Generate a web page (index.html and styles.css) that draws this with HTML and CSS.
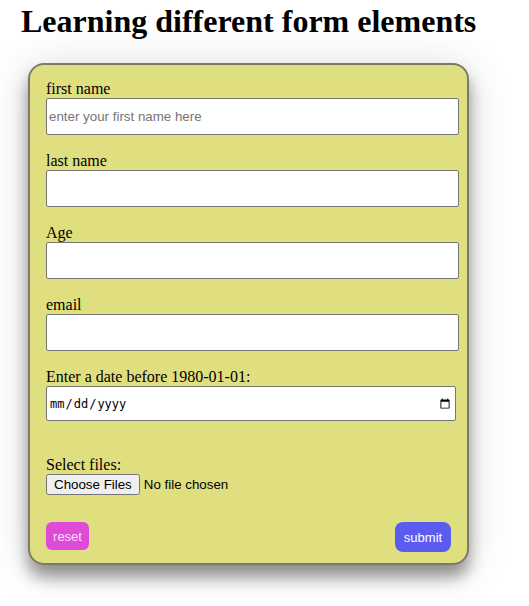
FILE: index.html
```html
<!DOCTYPE html>
<html>
<head>
<meta charset="utf-8">
<link rel="stylesheet" href="styles.css">
</head>
<body>
<h1 class="title">Learning different form elements</h1>
<form class="card">
  <div class="field">
    <label class="lbl" for="fn">first name</label>
    <input class="txt" id="fn" type="text" placeholder="enter your first name here">
  </div>
  <div class="field">
    <label class="lbl" for="ln">last name</label>
    <input class="txt" id="ln" type="text">
  </div>
  <div class="field">
    <label class="lbl" for="age">Age</label>
    <input class="txt" id="age" type="text">
  </div>
  <div class="field">
    <label class="lbl" for="em">email</label>
    <input class="txt" id="em" type="text">
  </div>
  <div class="field">
    <label class="lbl" for="dt">Enter a date before 1980-01-01:</label>
    <input class="date" id="dt" type="date" max="1979-12-31">
  </div>
  <div class="field files">
    <label class="lbl" for="fl">Select files:</label>
    <input class="file" id="fl" type="file" multiple>
  </div>
  <div class="actions">
    <button class="btn reset" type="reset">reset</button>
    <button class="btn submit" type="submit">submit</button>
  </div>
</form>
</body>
</html>
```

FILE: styles.css
```css
html, body {
  margin: 0;
  padding: 0;
  background: #ffffff;
}
body {
  font-family: "Liberation Serif", "Times New Roman", serif;
  font-size: 16px;
  color: #000;
  min-height: 606px;
  box-sizing: border-box;
  padding-bottom: 42px;
}
.title {
  font-family: "Liberation Serif", "Times New Roman", serif;
  font-size: 32px;
  font-weight: bold;
  margin: 3px 0 0 21px;
  line-height: 37px;
}
.card {
  box-sizing: border-box;
  width: 441px;
  margin: 23px 0 0 28px;
  padding: 14px 16px 11px 16px;
  background: #e0df80;
  border: 2px solid #7d7b68;
  border-radius: 16px;
  box-shadow: 0 12px 16px rgba(0, 0, 0, 0.4), 0 4px 45px rgba(0, 0, 0, 0.14);
  display: flex;
  flex-direction: column;
  gap: 16px;
}
.field {
  display: flex;
  flex-direction: column;
  align-items: flex-start;
}
.lbl {
  line-height: 19px;
  display: block;
}
.txt {
  box-sizing: border-box;
  width: 413px;
  height: 37px;
  margin: 0;
  padding: 0 2px;
  border: 1px solid #767676;
  border-radius: 2px;
  background: #fff;
  font-family: "Liberation Sans", Arial, sans-serif;
  font-size: 13.333px;
}
.txt::placeholder {
  color: #757575;
}
.date {
  box-sizing: border-box;
  width: 410px;
  height: 35px;
  margin: 0;
  padding: 0 2px;
  border: 1px solid #767676;
  border-radius: 2px;
  background: #fff;
  font-family: "DejaVu Sans Mono", "Liberation Mono", monospace;
  font-size: 12px;
}
.files {
  margin-top: 18px;
}
.file {
  margin: 0;
  font-family: "Liberation Sans", Arial, sans-serif;
  font-size: 13.333px;
}
.actions {
  display: flex;
  justify-content: space-between;
  align-items: flex-start;
  margin-top: 11px;
}
.btn {
  border: none;
  color: rgba(255, 255, 255, 0.85);
  font-family: "Liberation Sans", Arial, sans-serif;
  font-size: 13px;
  cursor: pointer;
}
.reset {
  background: #e04ad8;
  width: 43px;
  height: 28px;
  border-radius: 6px;
  padding: 0;
}
.submit {
  background: #5b5bf0;
  color: #ffffff;
  width: 56px;
  height: 30px;
  border-radius: 8px;
  padding: 0;
}
```
